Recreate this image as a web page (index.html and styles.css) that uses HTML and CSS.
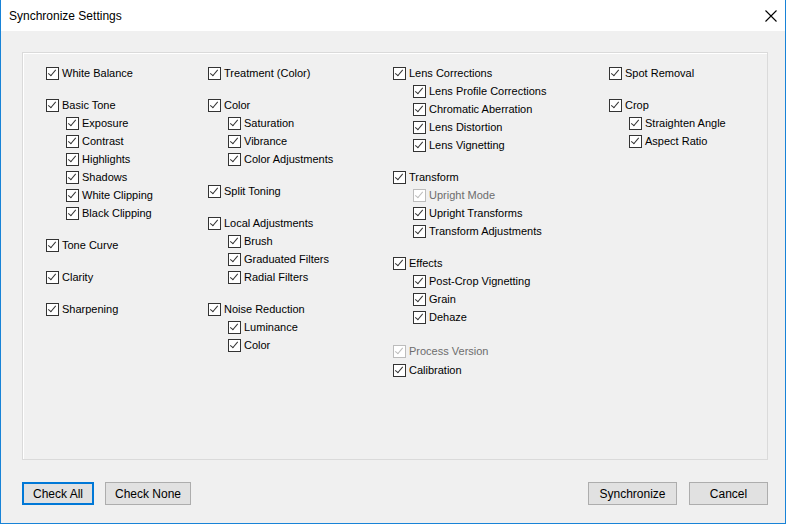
FILE: index.html
```html
<!DOCTYPE html>
<html lang="en">
<head>
  <meta charset="UTF-8">
  <title>Synchronize Settings</title>
  <link rel="stylesheet" href="styles.css">
</head>
<body>
  <div class="window">
    <div class="titlebar">
      <span class="title">Synchronize Settings</span>
      <svg class="close" width="12" height="12" viewBox="0 0 12 12"><path d="M0.5 0.5 L11.5 11.5 M11.5 0.5 L0.5 11.5" stroke="#000" stroke-width="1.1" fill="none"/></svg>
    </div>
    <div class="content">
      <div class="panel">
        <div class="col col1">
          <div class="group">
            <div class="item"><span class="box on"></span>White Balance</div>
          </div>
          <div class="group">
            <div class="item"><span class="box on"></span>Basic Tone</div>
            <div class="item sub"><span class="box on"></span>Exposure</div>
            <div class="item sub"><span class="box on"></span>Contrast</div>
            <div class="item sub"><span class="box on"></span>Highlights</div>
            <div class="item sub"><span class="box on"></span>Shadows</div>
            <div class="item sub"><span class="box on"></span>White Clipping</div>
            <div class="item sub"><span class="box on"></span>Black Clipping</div>
          </div>
          <div class="group">
            <div class="item"><span class="box on"></span>Tone Curve</div>
          </div>
          <div class="group">
            <div class="item"><span class="box on"></span>Clarity</div>
          </div>
          <div class="group">
            <div class="item"><span class="box on"></span>Sharpening</div>
          </div>
        </div>
        <div class="col col2">
          <div class="group">
            <div class="item"><span class="box on"></span>Treatment (Color)</div>
          </div>
          <div class="group">
            <div class="item"><span class="box on"></span>Color</div>
            <div class="item sub"><span class="box on"></span>Saturation</div>
            <div class="item sub"><span class="box on"></span>Vibrance</div>
            <div class="item sub"><span class="box on"></span>Color Adjustments</div>
          </div>
          <div class="group">
            <div class="item"><span class="box on"></span>Split Toning</div>
          </div>
          <div class="group">
            <div class="item"><span class="box on"></span>Local Adjustments</div>
            <div class="item sub"><span class="box on"></span>Brush</div>
            <div class="item sub"><span class="box on"></span>Graduated Filters</div>
            <div class="item sub"><span class="box on"></span>Radial Filters</div>
          </div>
          <div class="group">
            <div class="item"><span class="box on"></span>Noise Reduction</div>
            <div class="item sub"><span class="box on"></span>Luminance</div>
            <div class="item sub"><span class="box on"></span>Color</div>
          </div>
        </div>
        <div class="col col3">
          <div class="group">
            <div class="item"><span class="box on"></span>Lens Corrections</div>
            <div class="item sub"><span class="box on"></span>Lens Profile Corrections</div>
            <div class="item sub"><span class="box on"></span>Chromatic Aberration</div>
            <div class="item sub"><span class="box on"></span>Lens Distortion</div>
            <div class="item sub"><span class="box on"></span>Lens Vignetting</div>
          </div>
          <div class="group">
            <div class="item"><span class="box on"></span>Transform</div>
            <div class="item sub disabled"><span class="box on"></span>Upright Mode</div>
            <div class="item sub"><span class="box on"></span>Upright Transforms</div>
            <div class="item sub"><span class="box on"></span>Transform Adjustments</div>
          </div>
          <div class="group">
            <div class="item"><span class="box on"></span>Effects</div>
            <div class="item sub"><span class="box on"></span>Post-Crop Vignetting</div>
            <div class="item sub"><span class="box on"></span>Grain</div>
            <div class="item sub"><span class="box on"></span>Dehaze</div>
          </div>
          <div class="group process">
            <div class="item disabled"><span class="box on"></span>Process Version</div>
            <div class="item calib"><span class="box on"></span>Calibration</div>
          </div>
        </div>
        <div class="col col4">
          <div class="group">
            <div class="item"><span class="box on"></span>Spot Removal</div>
          </div>
          <div class="group">
            <div class="item"><span class="box on"></span>Crop</div>
            <div class="item sub"><span class="box on"></span>Straighten Angle</div>
            <div class="item sub"><span class="box on"></span>Aspect Ratio</div>
          </div>
        </div>
      </div>
      <div class="footer">
        <button class="btn default">Check All</button>
        <button class="btn none">Check None</button>
        <span class="spacer"></span>
        <button class="btn sync">Synchronize</button>
        <button class="btn cancel">Cancel</button>
      </div>
    </div>
  </div>
</body>
</html>
```

FILE: styles.css
```css
body {
  margin: 0;
  background: #fff;
  font-family: "Liberation Sans", Arial, sans-serif;
  font-size: 11px;
  color: #000;
}
.window {
  width: 784px;
  height: 523px;
  border: 1px solid #1883d7;
  border-top: none;
  background: #f0f0f0;
  display: flex;
  flex-direction: column;
}
.titlebar {
  height: 31px;
  background: #fff;
  display: flex;
  align-items: center;
  padding: 0 9px 0 8px;
}
.title {
  font-size: 12px;
  flex: 1;
  margin-top: 1px;
}
.close {
  margin-right: -1px;
}
.content {
  flex: 1;
  padding: 21px 17px 0 21px;
  display: flex;
  flex-direction: column;
}
.panel {
  height: 395px;
  border: 1px solid #dadada;
  box-shadow: inset 1px 1px 0 #fff;
  display: flex;
  padding: 11px 0 0 23px;
}
.col1 { width: 162px; }
.col2 { width: 185px; }
.col3 { width: 216px; }
.col4 { width: 150px; }
.group {
  margin-bottom: 14px;
}
.item {
  height: 18px;
  display: flex;
  align-items: center;
  white-space: nowrap;
}
.item.sub {
  padding-left: 20px;
}
.box {
  width: 11px;
  height: 11px;
  border: 1px solid #333;
  background: #fff;
  margin-right: 3px;
  position: relative;
  flex: none;
}
.box.on::after {
  content: "";
  position: absolute;
  left: 3px;
  top: 0px;
  width: 3px;
  height: 7px;
  border: solid #333;
  border-width: 0 1.3px 1.3px 0;
  transform: rotate(40deg);
}
.disabled {
  color: #6d6d6d;
}
.disabled .box {
  border-color: #bcbcbc;
}
.disabled .box.on::after {
  border-color: #bcbcbc;
}
.process {
  margin-top: 16px;
}
.calib {
  margin-top: 1px;
}
.footer {
  display: flex;
  margin-top: 22px;
}
.spacer { flex: 1; }
.btn {
  font-family: "Liberation Sans", Arial, sans-serif;
  font-size: 12px;
  height: 23px;
  background: #e1e1e1;
  border: 1px solid #adadad;
  color: #000;
  padding: 0;
  margin-right: 12px;
}
.btn.default {
  width: 72px;
  border: 2px solid #0078d7;
  margin-right: 11px;
}
.btn.none { width: 86px; }
.btn.sync { width: 89px; }
.btn.cancel { width: 79px; margin-right: 0; }
```
